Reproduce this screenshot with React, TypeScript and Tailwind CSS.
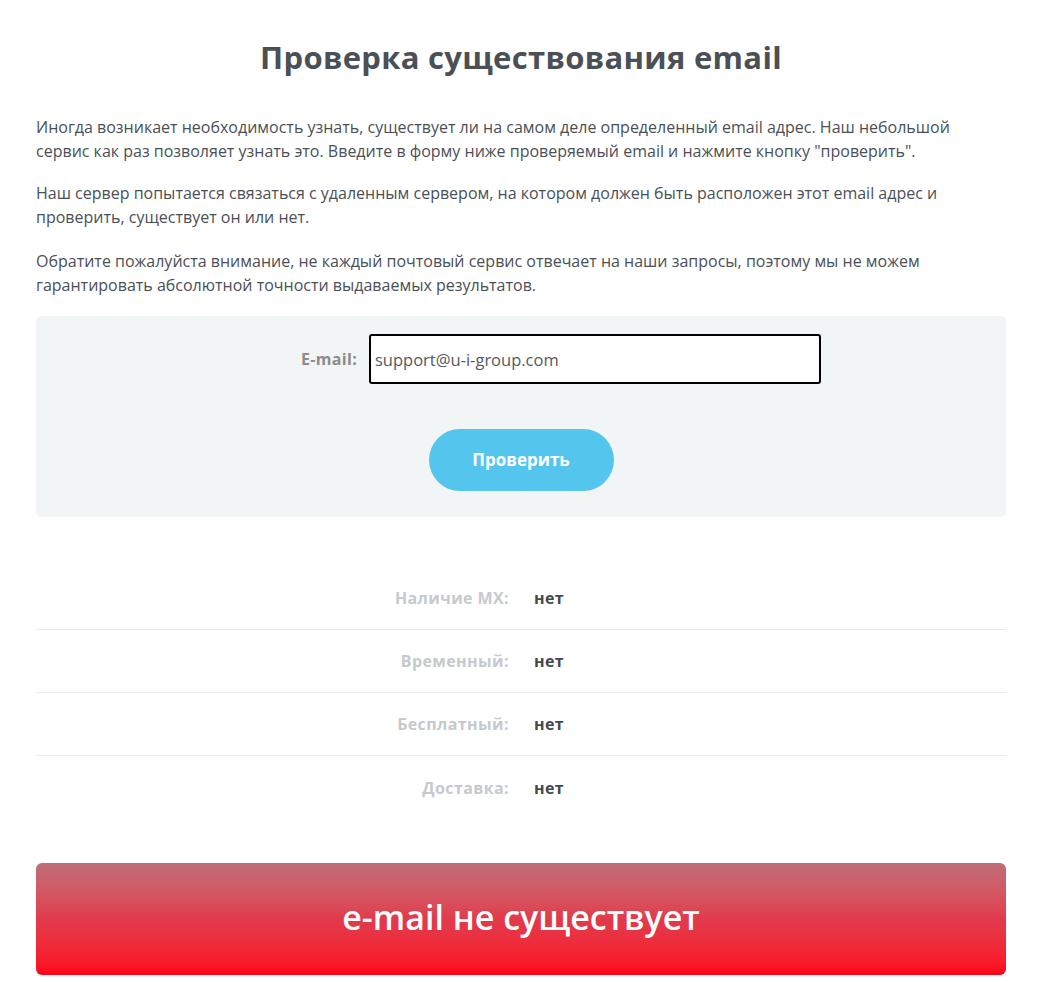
import React from "react";

const rows = [
  { label: "Наличие MX:", value: "нет" },
  { label: "Временный:", value: "нет" },
  { label: "Бесплатный:", value: "нет" },
  { label: "Доставка:", value: "нет" },
];

export default function App() {
  return (
    <div className="min-h-[982px] bg-white pl-[36px] pr-[40px] font-['Open_Sans',sans-serif]">
      <h1 className="pt-[37px] text-center text-[31px] font-bold leading-[40px] text-[#4b5056] font-['Open_Sans',sans-serif] tracking-[0.3px]">
        Проверка существования email
      </h1>
      <div className="mt-[38px] text-[16px] leading-[24px] text-[#4b5056] font-['Open_Sans',sans-serif]">
        <p>
          Иногда возникает необходимость узнать, существует ли на самом деле определенный email адрес. Наш небольшой
          <br />
          сервис как раз позволяет узнать это. Введите в форму ниже проверяемый email и нажмите кнопку "проверить".
        </p>
        <p className="mt-[18px]">
          Наш сервер попытается связаться с удаленным сервером, на котором должен быть расположен этот email адрес и
          <br />
          проверить, существует он или нет.
        </p>
        <p className="mt-[20px]">
          Обратите пожалуйста внимание, не каждый почтовый сервис отвечает на наши запросы, поэтому мы не можем
          <br />
          гарантировать абсолютной точности выдаваемых результатов.
        </p>
      </div>

      <div className="mt-[19px] h-[201px] rounded-[5px] bg-[#f2f5f6] pt-[18px]">
        <div className="flex items-center justify-center">
          <div className="flex items-center gap-[12px] pl-[79px]">
            <span className="w-[57px] text-right text-[16px] font-bold text-[#8c8c8c] tracking-[0.3px]">E-mail:</span>
            <input
              readOnly
              value="support@u-i-group.com"
              className="h-[50px] w-[452px] rounded-[3px] border-2 border-black bg-white px-[4px] text-[16.5px] text-[#555a60] outline-none font-['Open_Sans',sans-serif]"
            />
          </div>
        </div>
        <div className="mt-[45px] flex justify-center">
          <button className="h-[62px] w-[185px] rounded-full bg-[#54c5ec] text-[17px] font-bold text-white">
            Проверить
          </button>
        </div>
      </div>

      <div className="mt-[50px]">
        {rows.map((r, i) => (
          <div
            key={r.label}
            className={`flex h-[63px] items-center ${i < rows.length - 1 ? "border-b border-[#e8eaec]" : ""}`}
          >
            <div className="w-[473px] text-right text-[16px] font-bold text-[#c6c9cd] tracking-[0.4px]">{r.label}</div>
            <div className="ml-[25px] text-[16px] font-bold text-[#45494e] tracking-[0.4px]">{r.value}</div>
          </div>
        ))}
      </div>

      <div className="mt-[44px] flex h-[112px] items-center justify-center rounded-[6px] bg-gradient-to-b from-[#bf6e79] via-[#e13a4c] to-[#ff0016]">
        <span className="pb-[4px] text-[34px] font-semibold text-white font-['Open_Sans',sans-serif]">e-mail не существует</span>
      </div>
    </div>
  );
}
